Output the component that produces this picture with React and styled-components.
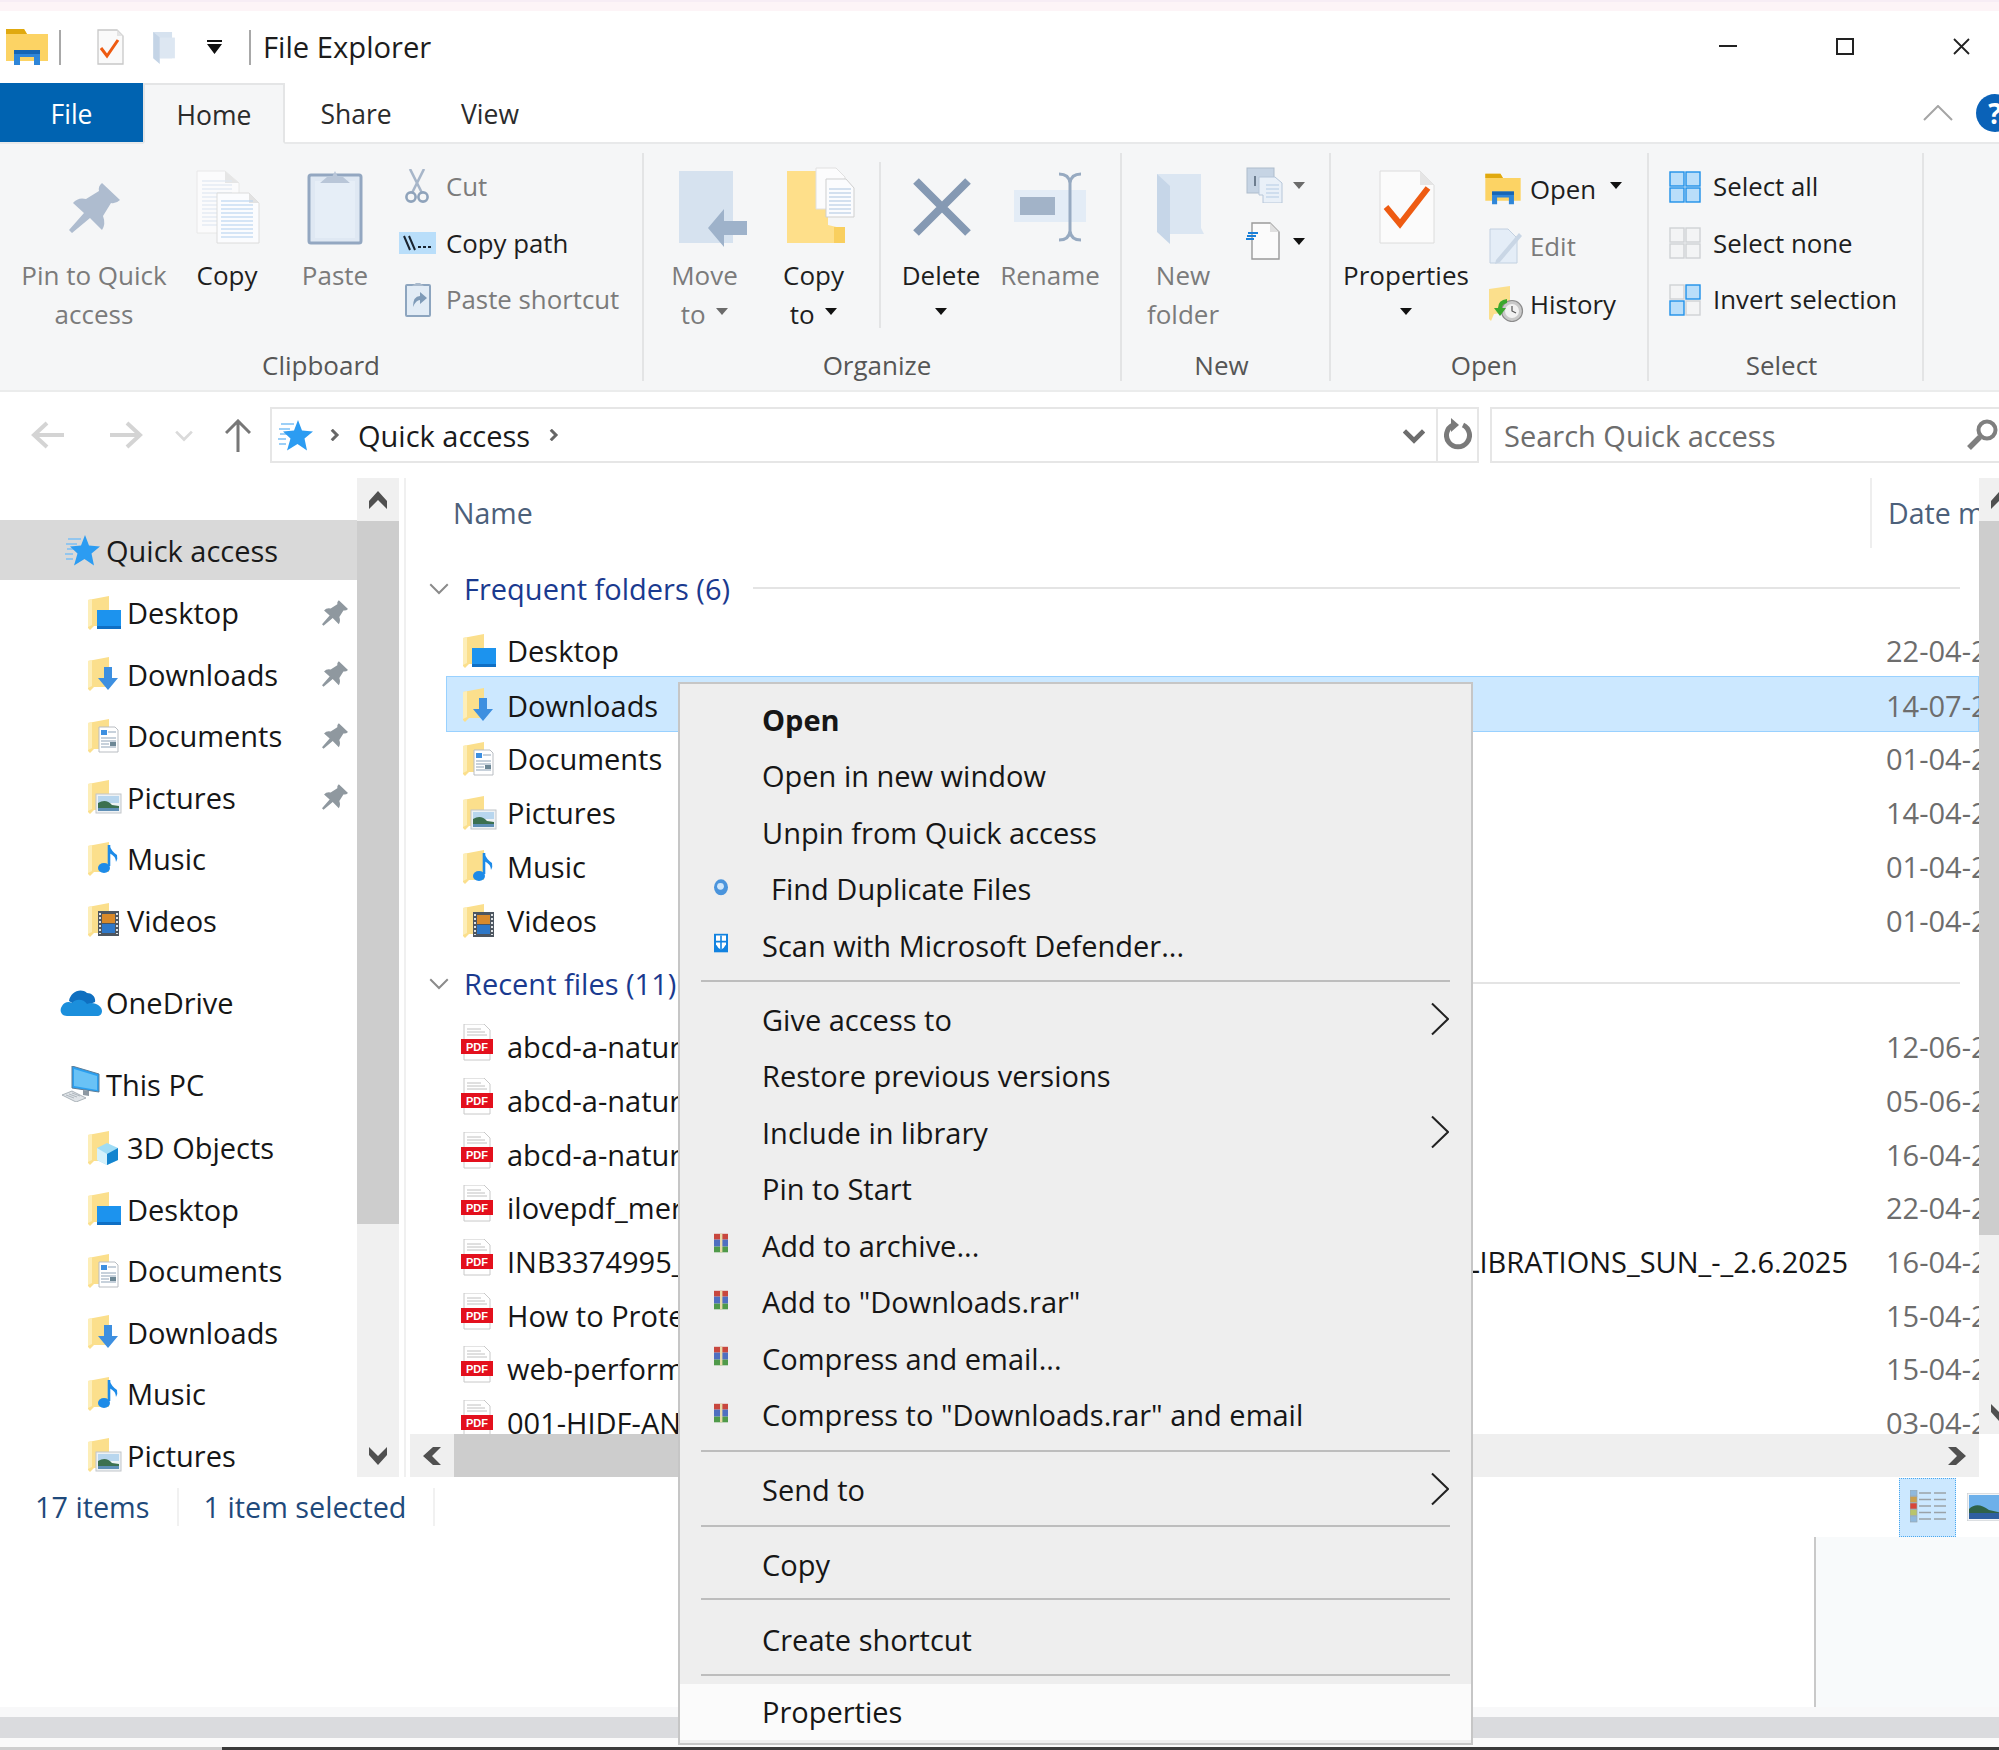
import React from 'react'
import styled, { createGlobalStyle } from 'styled-components'

const GlobalStyle = createGlobalStyle`
  html, body { margin: 0; padding: 0; background: #fff; }
  body { font-family: "Open Sans", "Noto Sans", sans-serif; color: #1a1a1a; }
  * { box-sizing: border-box; }
  svg { display: block; flex: none; }
`

const Page = styled.div`
  position: relative;
  width: 1999px;
  height: 1750px;
  overflow: hidden;
  background: #fff;
  display: flex;
  flex-direction: column;
`

const TopStrip = styled.div`
  height: 11px;
  flex: none;
  background: #fdf4f7;
  border-top: 2px solid #f7edf5;
`

const TitleBar = styled.div`
  height: 72px;
  flex: none;
  display: flex;
  align-items: center;
  padding-left: 6px;
`

const TitleDivider = styled.div`
  width: 2px;
  height: 35px;
  background: #a8a8a8;
  margin: ${p => p.$margin};
`

const TitleText = styled.div`
  font-size: 29.2px;
  margin-left: 12px;
  color: #1c1c1c;
`

const WindowButtons = styled.div`
  margin-left: auto;
  display: flex;
  align-items: center;
  gap: 99px;
  padding: 0 29px 2px 0;
`

const TabRow = styled.div`
  height: 61px;
  flex: none;
  display: flex;
  align-items: flex-start;
  position: relative;
  border-bottom: 2px solid #e8e9ea;
`

const Tab = styled.div`
  width: ${p => p.$w}px;
  height: ${p => (p.$active ? 61 : 59)}px;
  padding-top: 3px;
  display: flex;
  align-items: center;
  justify-content: center;
  font-size: 26.5px;
  color: ${p => (p.$file ? '#fff' : '#2b2b2b')};
  background: ${p => (p.$file ? '#0063b1' : p.$active ? '#f5f6f7' : 'transparent')};
  border: ${p => (p.$active ? '2px solid #e4e5e6' : 'none')};
  border-bottom: ${p => (p.$active ? '2px solid #f5f6f7' : 'none')};
  z-index: 1;
`

const TabRight = styled.div`
  margin-left: auto;
  display: flex;
  align-items: center;
  height: 59px;
  gap: 23px;
  margin-right: -15px;
`

const HelpBadge = styled.div`
  width: 38px;
  height: 38px;
  border-radius: 50%;
  background: #0a62b8;
  color: #fff;
  font-size: 28px;
  font-weight: 700;
  display: flex;
  align-items: center;
  justify-content: center;
`

const Ribbon = styled.div`
  height: 248px;
  flex: none;
  display: flex;
  padding: 9px 0;
  background: #f5f6f7;
  border-bottom: 2px solid #ebecec;
`

const Group = styled.div`
  width: ${p => p.$w}px;
  flex: none;
  display: flex;
  flex-direction: column;
  border-right: 2px solid #e3e4e5;
`

const GroupBody = styled.div`
  flex: 1;
  display: flex;
  min-height: 0;
`

const GroupLabel = styled.div`
  height: 34px;
  flex: none;
  text-align: center;
  line-height: 36px;
  font-size: 26px;
  color: #565656;
  padding-right: ${p => p.$shift || 0}px;
`

const BigButton = styled.div`
  width: ${p => p.$w}px;
  flex: none;
  display: flex;
  flex-direction: column;
  align-items: center;
  padding-top: 11.5px;
`

const BigIconBox = styled.div`
  height: 91px;
  padding-top: 4px;
  flex: none;
`

const BigLabel = styled.div`
  font-size: 26px;
  line-height: 39px;
  text-align: center;
  color: ${p => (p.$off ? '#7b7b7b' : '#1e1e1e')};
`

const Caret = styled.span`
  display: inline-block;
  width: 0;
  height: 0;
  border-left: 6px solid transparent;
  border-right: 6px solid transparent;
  border-top: 7px solid ${p => (p.$off ? '#6b6b6b' : '#111')};
  vertical-align: 9px;
  margin-left: ${p => p.$ml || 0}px;
  margin-bottom: ${p => p.$mb || 0}px;
`

const InnerDivider = styled.div`
  width: 2px;
  height: 166px;
  margin: 9px 0 0 ${p => p.$ml}px;
  background: #e3e4e5;
  flex: none;
`

const SmallColumn = styled.div`
  display: flex;
  flex-direction: column;
  flex: none;
  padding-top: ${p => p.$pt}px;
  margin-left: ${p => p.$ml || 0}px;
`

const SmallRow = styled.div`
  height: ${p => p.$h}px;
  display: flex;
  align-items: center;
  font-size: 25.8px;
  white-space: nowrap;
  color: ${p => (p.$off ? '#7b7b7b' : '#1e1e1e')};
`

const IconSlot = styled.div`
  width: ${p => p.$w}px;
  flex: none;
  display: flex;
  padding-left: ${p => p.$pl || 0}px;
`

const AddressRow = styled.div`
  height: 86px;
  flex: none;
  display: flex;
  align-items: flex-start;
  padding-top: 15px;
`

const NavArrows = styled.div`
  width: 270px;
  height: 56px;
  flex: none;
  display: flex;
  align-items: center;
  padding-left: 31px;
`

const AddressBox = styled.div`
  width: 1209px;
  height: 56px;
  flex: none;
  border: 2px solid #e6e6e6;
  display: flex;
  align-items: center;
  font-size: 29px;
  padding-left: 6px;
`

const AddressEnd = styled.div`
  margin-left: auto;
  height: 100%;
  display: flex;
  align-items: center;
  padding-right: ${p => p.$pr || 0}px;
`

const AddressRefresh = styled.div`
  width: 41px;
  height: 100%;
  border-left: 2px solid #e6e6e6;
  display: flex;
  align-items: center;
  justify-content: center;
  margin-left: 11px;
`

const SearchBox = styled.div`
  width: 520px;
  height: 56px;
  margin-left: 11px;
  flex: none;
  border: 2px solid #e6e6e6;
  display: flex;
  align-items: center;
  font-size: 29px;
  color: #6d6d6d;
  padding-left: 12px;
`

const Main = styled.div`
  height: 999px;
  flex: none;
  display: flex;
`

const NavPane = styled.div`
  width: 357px;
  flex: none;
  overflow: hidden;
  padding-top: 42px;
`

const NavSelected = styled.div`
  height: 60px;
  margin-bottom: 2px;
  background: #d9d9d9;
  display: flex;
  align-items: center;
  padding-left: 65px;
  font-size: 29px;
`

const NavRow = styled.div`
  height: 61.5px;
  flex: none;
  display: flex;
  align-items: center;
  font-size: 29px;
  padding-left: ${p => p.$pl}px;
  margin-top: ${p => p.$mt || 0}px;
  margin-bottom: ${p => p.$mb || 0}px;
  color: #161616;
`

const NavText = styled.span`
  margin-left: ${p => p.$ml}px;
`

const NavPin = styled.div`
  margin-left: auto;
  margin-right: 9px;
`

const VScroll = styled.div`
  width: ${p => p.$w}px;
  height: ${p => p.$h || 999}px;
  flex: none;
  overflow: hidden;
  display: flex;
  flex-direction: column;
  background: #f0f0f0;
`

const ScrollButton = styled.div`
  width: 42px;
  height: 43px;
  flex: none;
  display: flex;
  align-items: center;
  justify-content: center;
  margin-top: ${p => (p.$end ? 'auto' : 0)};
`

const ScrollThumb = styled.div`
  height: ${p => p.$h}px;
  flex: none;
  background: #cdcdcd;
`

const Content = styled.div`
  width: 1575px;
  flex: none;
  margin-left: 5px;
  border-left: 2px solid #f0f0f0;
  display: flex;
  flex-direction: column;
  min-width: 0;
`

const FileArea = styled.div`
  height: 956px;
  flex: none;
  overflow: hidden;
`

const ColumnHead = styled.div`
  height: 70px;
  display: flex;
  align-items: center;
  font-size: 28.5px;
  color: #4c607a;
  padding-left: 47px;
`

const ColumnName = styled.div`
  width: 1417px;
  flex: none;
`

const ColumnDate = styled.div`
  height: 70px;
  border-left: 2px solid #eee;
  padding-left: 16px;
  line-height: 70px;
  white-space: nowrap;
  width: 109px;
  flex: none;
  overflow: hidden;
`

const SectionRow = styled.div`
  height: 40px;
  margin-top: ${p => p.$mt}px;
  display: flex;
  align-items: center;
  padding-left: 23px;
  font-size: 29px;
  color: #1a3a8f;
`

const SectionName = styled.span`
  margin-left: 15px;
  white-space: nowrap;
`

const SectionLine = styled.div`
  flex: none;
  width: ${p => p.$w}px;
  height: 2px;
  background: #e4e4e4;
  margin-left: auto;
  margin-right: 19px;
`

const FileList = styled.div`
  margin-top: ${p => p.$mt}px;
`

const FileRow = styled.div`
  height: ${p => (p.$selected ? 56 : p.$h)}px;
  margin: ${p => (p.$selected ? '-1.5px 0 -0.5px 40px' : '0 0 0 40px')};
  padding: ${p => (p.$selected ? '2px 0 0 17px' : '0 0 0 17px')};
  display: flex;
  align-items: center;
  font-size: 29px;
  color: #161616;
  white-space: nowrap;
  background: ${p => (p.$selected ? '#cce8ff' : 'transparent')};
  box-shadow: ${p => (p.$selected ? 'inset 0 0 0 1px #99d1ff' : 'none')};
`

const PdfSlot = styled.div`
  margin: -8px 0 0 -2px;
  flex: none;
`

const FileName = styled.div`
  width: 1379px;
  flex: none;
  margin-left: ${p => p.$ml}px;
  padding-right: ${p => p.$pr || 0}px;
  display: flex;
  justify-content: space-between;
  overflow: hidden;
`

const FileDate = styled.div`
  width: 95px;
  flex: none;
  overflow: hidden;
  color: #6d6d6d;
`

const HScroll = styled.div`
  height: 43px;
  flex: none;
  margin-left: 4px;
  display: flex;
  background: #efefef;
`

const HThumb = styled.div`
  width: 800px;
  background: #cdcdcd;
`

const HButton = styled.div`
  width: 44px;
  display: flex;
  align-items: center;
  justify-content: center;
  margin-left: ${p => (p.$end ? 'auto' : 0)};
`

const StatusBar = styled.div`
  height: 60px;
  flex: none;
  display: flex;
  align-items: center;
  font-size: 28.8px;
  color: #1f4a7b;
`

const StatusCell = styled.div`
  height: 38px;
  line-height: 38px;
  padding: 0 ${p => p.$pr}px 0 ${p => p.$pl}px;
  border-right: 2px solid #f1f1f1;
`

const ViewButton = styled.div`
  width: 57px;
  height: 59px;
  margin-left: auto;
  background: #cce8ff;
  border: 1px dotted #4aa8f0;
  display: flex;
  align-items: center;
  justify-content: center;
`

const ViewThumb = styled.div`
  margin: 0 -4px 0 11px;
`

const LowerPane = styled.div`
  height: 170px;
  flex: none;
  display: flex;
  justify-content: flex-end;
`

const PreviewPane = styled.div`
  width: 185px;
  background: #f8fafb;
  border-left: 2px solid #c9c9c9;
`

const Fade = styled.div`
  height: 10px;
  flex: none;
  background: #f8f8f9;
`

const GrayBar = styled.div`
  height: 21px;
  flex: none;
  background: #dadbde;
`

const BottomBand = styled.div`
  height: 9px;
  flex: none;
  background: #fafafa;
`

const BottomEdge = styled.div`
  height: 3px;
  flex: none;
  background: linear-gradient(to right, #cfcfcf 0, #cfcfcf 222px, #3a3a3a 222px);
`

const ContextMenu = styled.div`
  position: absolute;
  left: 678px;
  top: 682px;
  width: 795px;
  height: 1063px;
  padding-top: 7px;
  background: #eeeeee;
  border: 2px solid #c6c6c6;
  display: flex;
  flex-direction: column;
  z-index: 5;
`

const MenuItem = styled.div`
  height: 56.5px;
  flex: none;
  display: flex;
  align-items: center;
  font-size: 29px;
  color: #161616;
  position: relative;
  padding-left: ${p => p.$pl || 82}px;
  font-weight: ${p => (p.$bold ? 700 : 400)};
  background: ${p => (p.$hot ? '#fbfbfb' : 'transparent')};
`

const MenuIcon = styled.div`
  position: absolute;
  left: 34px;
  top: 50%;
  transform: translateY(-60%);
`

const MenuArrow = styled.div`
  position: absolute;
  right: 22px;
  top: 50%;
  transform: translateY(-50%);
`

const MenuSeparator = styled.div`
  height: ${p => p.$h}px;
  flex: none;
  padding-top: ${p => p.$pt}px;
`

const MenuLine = styled.div`
  height: 2px;
  margin: 0 21px;
  background: #bdbdbd;
`

const TurnedSvg = styled.svg`
  transform: rotate(${p => p.$deg}deg);
`

const FlippedSvg = styled.svg`
  transform: ${p => (p.$flip ? 'scaleX(-1)' : 'none')};
`

const BigSvg = styled.svg`
  overflow: visible;
`

// ---- drawings ----

const FolderBase = ({ children }) => (
  <svg width="34" height="34" viewBox="0 0 34 34">
    <path d="M0 4 L21 0 V30 L6 30 L2 34 L0 32Z" fill="#fbdf8c" />
    <path d="M0 4 L4 3 V29 L0 31Z" fill="#fdeeb8" />
    {children}
  </svg>
)

const DesktopFolder = () => (
  <FolderBase>
    <rect x="9" y="14" width="24" height="19" fill="#1c93ee" />
    <rect x="9" y="30" width="24" height="3" fill="#0f6fc4" />
  </FolderBase>
)

const DownloadsFolder = () => (
  <FolderBase>
    <path d="M16 10 H24 V21 H30 L20 33 L10 21 H16Z" fill="#3d8fe0" />
  </FolderBase>
)

const DocumentsFolder = () => (
  <FolderBase>
    <path d="M11 8 H27 L30 11 V33 H11Z" fill="#fff" stroke="#b9bdc2" />
    <rect x="13" y="11" width="6" height="5" fill="#3d8fe0" />
    <path d="M20 13 H28 M13 19 H28 M13 22 H28 M13 25 H21 M13 28 H28" stroke="#8fa3b8" strokeWidth="1.2" />
    <rect x="22" y="23" width="6" height="4" fill="#6d8795" />
  </FolderBase>
)

const PicturesFolder = () => (
  <FolderBase>
    <rect x="8" y="14" width="25" height="19" fill="#eef2f5" stroke="#c2c6ca" />
    <rect x="10" y="16" width="21" height="7" fill="#b8d6ee" />
    <path d="M10 23 Q18 18 24 25 L31 26 V31 H10Z" fill="#3c7050" />
    <rect x="10" y="28" width="21" height="3" fill="#5f8fb6" />
  </FolderBase>
)

const MusicFolder = () => (
  <FolderBase>
    <path d="M21 3 V24" stroke="#1d8be8" strokeWidth="2.6" />
    <path d="M21 3 Q24 10 29 13 Q30 17 28 20 Q28 14 21 11Z" fill="#1d8be8" />
    <ellipse cx="16" cy="26" rx="6" ry="5" fill="#1d8be8" />
  </FolderBase>
)

const VideosFolder = () => (
  <FolderBase>
    <rect x="10" y="8" width="21" height="25" fill="#4d5660" />
    <rect x="14" y="11" width="13" height="9" fill="#d98a2b" />
    <rect x="14" y="21" width="13" height="9" fill="#2f78c8" />
    <path d="M12 10 V31 M29 10 V31" stroke="#dfe3e6" strokeWidth="2" strokeDasharray="2 2" />
  </FolderBase>
)

const ObjectsFolder = () => (
  <FolderBase>
    <path d="M19 12 L30 17 V29 L19 34 L9 29 V17Z" fill="#9fdcf5" />
    <path d="M19 23 L30 17 V29 L19 34Z" fill="#1384cf" />
    <path d="M19 23 L9 17 V29 L19 34Z" fill="#d5f1fb" />
  </FolderBase>
)

const folderIcons = {
  desktop: DesktopFolder,
  downloads: DownloadsFolder,
  documents: DocumentsFolder,
  pictures: PicturesFolder,
  music: MusicFolder,
  videos: VideosFolder,
  objects: ObjectsFolder,
}

const StarIcon = () => (
  <svg width="35" height="31" viewBox="0 0 35 31">
    <path d="M3 4 H16 M1 9 H12 M2 14 H9 M0 19 H8 M1 24 H8" stroke="#7cc0f5" strokeWidth="1.5" />
    <path d="M20 0 L24 10.5 L35 11.5 L26.5 18.5 L29 30.5 L19.5 24 L9 30.5 L12.5 18.5 L5 11.5 L16 10.5Z" fill="#2c9cf2" />
  </svg>
)

const CloudIcon = () => (
  <svg width="42" height="27" viewBox="0 0 42 27">
    <path d="M9 12 C10 4 20 -2 27 4 C32 4 36 8 35 13 L20 19Z" fill="#0f6fc0" />
    <path d="M7 27 C1 27 -1 21 2 17 C4 13 9 12 12 14 C16 9 24 10 27 15 C34 12 42 17 42 22 C42 25 40 27 37 27Z" fill="#1b8fdc" />
  </svg>
)

const PcIcon = () => (
  <svg width="38" height="36" viewBox="0 0 38 36">
    <path d="M10 0 L37 8 V26 L10 22Z" fill="#2a9ff0" stroke="#5d7c96" strokeWidth="1" />
    <path d="M12 3 L35 10 V24 L12 20Z" fill="#69c2f6" />
    <path d="M21 24 L27 25 V30 L21 29Z" fill="#8d98a2" />
    <path d="M0 29 L10 25 L24 32 L14 36Z" fill="#dfe3e7" stroke="#9aa3ab" strokeWidth=".8" />
    <path d="M4 29 L12 32 M7 28 L15 31 M10 27 L18 30" stroke="#a8b0b8" strokeWidth=".9" />
  </svg>
)

const PinIcon = () => (
  <svg width="26" height="26" viewBox="0 0 51 50">
    <path d="M33 0 L51 17 Q47 21 42 20 L34 33 Q37 41 33 47 L21 35 L3 50 L0 47 L15 30 L4 20 Q9 14 17 16 L30 8 Q29 3 33 0Z" fill="#8f989f" />
  </svg>
)

const PdfIcon = () => (
  <svg width="32" height="37" viewBox="0 0 32 37">
    <path d="M3 0 H23 L29 6 V36 H3Z" fill="#fff" stroke="#c8c8c8" />
    <path d="M6 5 H20 M6 8 H24 M6 11 H26" stroke="#c0c0c0" />
    <rect x="0" y="15" width="32" height="15" fill="#e3101d" />
    <text x="16" y="27" textAnchor="middle" fontSize="11" fontWeight="700" fill="#fff" fontFamily="Liberation Sans, sans-serif">PDF</text>
  </svg>
)

const ExplorerIcon = ({ w = 42, h = 38 }) => (
  <svg width={w} height={h} viewBox="0 0 42 38">
    <path d="M0 1 H18 L21 6 H42 V33 H0Z" fill="#fcd364" />
    <path d="M0 1 H18 L21 6 H0Z" fill="#e0a90f" />
    <path d="M8 37 V22 H34 V37 H28 V29 H14 V37Z" fill="#2f86d8" />
    <path d="M8 22 H34 V26 H8Z" fill="#1565b4" />
  </svg>
)

const PageCheck = () => (
  <svg width="27" height="36" viewBox="0 0 27 36">
    <path d="M1 1 H20 L26 7 V35 H1Z" fill="#fafafa" stroke="#c8c8c8" strokeWidth="1.3" />
    <path d="M20 1 V7 H26Z" fill="#e4e4e4" />
    <path d="M4 19 L10 27 L21 11" fill="none" stroke="#ee5b12" strokeWidth="3" />
  </svg>
)

const PaleFolder = () => (
  <svg width="23" height="34" viewBox="0 0 24 36">
    <path d="M0 2 H20 V30 H5Z" fill="#d6e2ef" />
    <path d="M0 2 L7 8 V36 L0 30Z" fill="#c4d4e6" />
    <path d="M7 8 H23 V30 H7Z" fill="#dde7f2" />
  </svg>
)

const turns = { down: 0, up: 180, left: 90, right: -90 }

const Chevron = ({ dir = 'down', size = 16, color = '#555', weight = 3 }) => (
  <TurnedSvg $deg={turns[dir]} width={size} height={size} viewBox="0 0 16 16">
    <path d="M1 5 L8 12 L15 5" fill="none" stroke={color} strokeWidth={weight} />
  </TurnedSvg>
)

const BlockChevron = ({ dir = 'down' }) => (
  <TurnedSvg $deg={turns[dir]} width="20" height="18" viewBox="0 0 20 18">
    <path d="M1 0 L10 9 L19 0 V8 L10 18 L1 8Z" fill="#505050" />
  </TurnedSvg>
)

const Arrow = ({ flip }) => (
  <FlippedSvg $flip={flip} width="35" height="30" viewBox="0 0 35 30">
    <path d="M33 15 H4 M16 3 L3 15 L16 27" fill="none" stroke="#d4d4d4" strokeWidth="4" />
  </FlippedSvg>
)

const BigIcon = ({ children }) => (
  <BigSvg width="92" height="78" viewBox="0 0 92 78">
    {children}
  </BigSvg>
)

const PinBig = () => (
  <BigIcon>
    <g transform="translate(21 14)">
      <path d="M33 0 L51 17 Q47 21 42 20 L34 33 Q37 41 33 47 L21 35 L3 50 L0 47 L15 30 L4 20 Q9 14 17 16 L30 8 Q29 3 33 0Z" fill="#aebccf" />
    </g>
  </BigIcon>
)

const lineRows = (x, y, w, n, color) =>
  Array.from({ length: n }, (_, i) => (
    <path key={i} d={`M${x} ${y + i * 4} H${x + w}`} stroke={color} strokeWidth="1.2" />
  ))

const CopyBig = () => (
  <BigIcon>
    <path d="M16 2 H44 L58 14 V64 H16Z" fill="#fbfbfc" stroke="#e8e8e8" />
    <path d="M44 2 V14 H58Z" fill="#e6e6e6" />
    {lineRows(21, 12, 30, 12, '#e0e8f2')}
    <path d="M36 24 H68 L78 34 V74 H36Z" fill="#fbfcfe" stroke="#dcdcdc" />
    <path d="M68 24 V34 H78Z" fill="#e2e2e2" />
    {lineRows(40, 32, 32, 10, '#bcd6f0')}
  </BigIcon>
)

const PasteBig = () => (
  <BigIcon>
    <rect x="20" y="6" width="52" height="68" rx="2" fill="#dfe8f3" stroke="#93a7c1" strokeWidth="3" />
    <rect x="26" y="12" width="40" height="57" fill="#e6eef7" />
    <path d="M31 14 L38 8 H43 L46 2 L49 8 H54 L61 14Z" fill="#b9c6d8" />
  </BigIcon>
)

const ScissorsIcon = () => (
  <svg width="24" height="35" viewBox="0 0 24 35">
    <path d="M5 0 L17 24 M19 0 L7 24" stroke="#a7b6c9" strokeWidth="2.6" fill="none" />
    <circle cx="6" cy="28" r="4.6" fill="none" stroke="#8fa3bb" strokeWidth="2.6" />
    <circle cx="18" cy="28" r="4.6" fill="none" stroke="#8fa3bb" strokeWidth="2.6" />
  </svg>
)

const CopyPathIcon = () => (
  <svg width="37" height="22" viewBox="0 0 37 22">
    <rect width="37" height="22" fill="#b9defa" />
    <path d="M5 4 L11 18 M10 4 L16 18" stroke="#1a2430" strokeWidth="2" />
    <path d="M19 15 h3 M24 15 h3 M29 15 h3" stroke="#1a2430" strokeWidth="2" />
  </svg>
)

const PasteShortcutIcon = () => (
  <svg width="26" height="36" viewBox="0 0 26 36">
    <rect x="1" y="4" width="24" height="31" rx="1" fill="#e2ecf6" stroke="#8da5bf" strokeWidth="2" />
    <path d="M7 5 L11 2 H15 L19 5Z" fill="#a9bacd" />
    <path d="M8 26 Q8 15 15 15 V11 L22 17 L15 23 V19 Q11 19 8 26Z" fill="#7f9bb8" />
  </svg>
)

const MoveBig = () => (
  <BigIcon>
    <rect x="20" y="2" width="54" height="72" fill="#d6e2ef" />
    <path d="M49 59 L65 40 V52 H88 V66 H65 V78Z" fill="#9eb2ca" />
  </BigIcon>
)

const CopyToBig = () => (
  <BigIcon>
    <path d="M19 2 H60 V56 L77 60 V74 H19Z" fill="#fedf8a" />
    <path d="M66 58 H77 V74 H66Z" fill="#f9cf5f" />
    <path d="M48 -1 H68 L77 8 V40 H48Z" fill="#fcfcfd" stroke="#e0e0e0" />
    <path d="M58 10 H78 L86 19 V48 H58Z" fill="#fbfcfe" stroke="#cfcfcf" />
    {lineRows(61, 20, 22, 7, '#b9cde4')}
  </BigIcon>
)

const DeleteBig = () => (
  <BigIcon>
    <path d="M21 12 L73 64 M73 12 L21 64" stroke="#8599b3" strokeWidth="8" />
  </BigIcon>
)

const RenameBig = () => (
  <BigIcon>
    <rect x="10" y="21" width="72" height="32" fill="#e3ecf6" />
    <rect x="16" y="28" width="35" height="18" fill="#a2b3c8" />
    <path d="M55 5 Q65 5 66 14 V62 Q65 71 55 71 M77 5 Q67 5 66 14 M66 62 Q67 71 77 71" fill="none" stroke="#97aac1" strokeWidth="3" />
  </BigIcon>
)

const NewFolderBig = () => (
  <BigIcon>
    <g transform="translate(20 5)">
      <path d="M0 0 H44 V54 L47 60 H10 L0 54Z" fill="#dbe6f2" />
      <path d="M0 0 L13 12 V70 L0 58Z" fill="#c6d6e8" />
    </g>
  </BigIcon>
)

const PropertiesBig = () => (
  <BigIcon>
    <g transform="translate(20 2)">
      <path d="M0 0 H40 L54 14 V72 H0Z" fill="#fbfbfb" stroke="#dcdcdc" />
      <path d="M40 0 V14 H54Z" fill="#e5e5e5" />
      <path d="M6 36 L20 53 L48 17" fill="none" stroke="#ee5b12" strokeWidth="6" />
    </g>
  </BigIcon>
)

const MoveItemsSmall = () => (
  <svg width="37" height="36" viewBox="0 0 37 36">
    <rect x="1" y="1" width="27" height="25" fill="#c6d4e4" stroke="#aebccc" />
    <path d="M8 9 h2 v10 h-2z" fill="#6d7d8f" />
    <path d="M13 10 H29 L36 16 V36 H17 V28 H13Z" fill="#e9f0f8" stroke="#b6c6d9" />
    <path d="M20 18 H33 M20 22 H33 M20 26 H33 M20 30 H33" stroke="#b4cbe4" />
  </svg>
)

const NewItemSmall = () => (
  <svg width="34" height="38" viewBox="0 0 34 38">
    <path d="M6 1 H24 L33 10 V37 H6Z" fill="#fbfbfb" stroke="#9a9a9a" strokeWidth="1.4" />
    <path d="M24 1 V10 H33Z" fill="#e0e0e0" />
    <path d="M2 11 H12 M1 14 H10 M0 17 H8" stroke="#1a7fd8" strokeWidth="2" />
  </svg>
)

const EditIcon = () => (
  <svg width="34" height="36" viewBox="0 0 34 36">
    <path d="M1 1 H19 L28 10 V35 H1Z" fill="#e4edf7" stroke="#c2d0e0" />
    <path d="M7 32 L30 5 L33 8 L11 34 L6 36Z" fill="#c9d6e5" />
  </svg>
)

const HistoryIcon = () => (
  <svg width="35" height="36" viewBox="0 0 35 36">
    <path d="M0 3 L21 0 V26 L5 28 L2 35 L0 33Z" fill="#fbdf8c" />
    <circle cx="23" cy="25" r="10.5" fill="#c9c9c9" stroke="#8b8b8b" strokeWidth="1.2" />
    <circle cx="23" cy="25" r="7" fill="#f1f1f1" />
    <path d="M23 20 V25 L27 27" fill="none" stroke="#555" strokeWidth="1.2" />
    <path d="M18 13 Q9 14 9 22 H5 L11 30 L17 22 H13 Q13 18 18 17Z" fill="#3aa82d" />
  </svg>
)

const SelectGrid = ({ on }) => {
  const cell = (x, y, active, key) => (
    <rect key={key} x={x} y={y} width="14" height="14" fill={active ? '#b9defa' : '#f3f4f5'} stroke={active ? '#1e90e8' : '#cfd2d5'} strokeWidth="1.4" />
  )
  return (
    <svg width="33" height="33" viewBox="0 0 33 33">
      {cell(1, 2, on[0], 'a')}
      {cell(17, 2, on[1], 'b')}
      {cell(1, 18, on[2], 'c')}
      {cell(17, 18, on[3], 'd')}
    </svg>
  )
}

const RefreshIcon = () => (
  <svg width="28" height="34" viewBox="0 0 28 34">
    <path d="M9 7 A11.5 11.5 0 1 0 19 7" fill="none" stroke="#7a7a7a" strokeWidth="5" />
    <path d="M7 0 L7 14 L15 7Z" fill="#7a7a7a" />
  </svg>
)

const SearchIcon = () => (
  <svg width="32" height="32" viewBox="0 0 32 32">
    <circle cx="21" cy="11" r="8.5" fill="none" stroke="#7f7f7f" strokeWidth="4" />
    <path d="M14 18 L3 29" stroke="#7f7f7f" strokeWidth="5.5" />
  </svg>
)

const DetailsView = () => (
  <svg width="36" height="34" viewBox="0 0 36 34">
    {[0, 1, 2, 3, 4].map(i => (
      <g key={i}>
        <rect x="0" y={i * 6.5} width="7" height="6" fill={['#8fb8dc', '#c9a04d', '#d8453a', '#b9c46a', '#8fb8dc'][i]} stroke="#9ba6ad" strokeWidth=".7" />
        <path d={`M9 ${i * 6.5 + 3} H21 M24 ${i * 6.5 + 3} H36`} stroke="#9aa2a8" strokeWidth="1.6" />
      </g>
    ))}
  </svg>
)

const ThumbView = () => (
  <svg width="36" height="28" viewBox="0 0 36 28">
    <rect width="36" height="28" fill="#f3f5f7" stroke="#c4c8cc" />
    <rect x="2" y="2" width="34" height="24" fill="#6db0ea" />
    <path d="M2 16 Q10 8 22 17 L36 20 V22 H2Z" fill="#2f6248" />
    <rect x="2" y="20" width="34" height="6" fill="#2f5fa0" />
  </svg>
)

const DuplicateIcon = () => (
  <svg width="14" height="17" viewBox="0 0 14 17">
    <ellipse cx="7" cy="8.5" rx="7" ry="8" fill="#4a94dc" />
    <circle cx="6.5" cy="7.5" r="3.4" fill="#cfe6fa" />
  </svg>
)

const DefenderIcon = () => (
  <svg width="14" height="19" viewBox="0 0 14 19">
    <rect width="14" height="19" fill="#1182e0" />
    <path d="M2 2 H12 V11 Q10 15 7 16 Q4 15 2 11Z" fill="#fff" />
    <path d="M7 2 V16 M2 8 H12" stroke="#1182e0" strokeWidth="1.6" />
  </svg>
)

const RarIcon = () => (
  <svg width="14" height="19" viewBox="0 0 14 19">
    <rect y="0" width="14" height="6" fill="#c8473e" />
    <rect y="6" width="14" height="7" fill="#4f6fc0" />
    <rect y="13" width="14" height="6" fill="#4f9a4a" />
    <rect x="6" width="2.4" height="19" fill="#e8d9a8" />
  </svg>
)

const MenuChevron = () => (
  <svg width="18" height="33" viewBox="0 0 18 33">
    <path d="M1 1 L17 16.5 L1 32" fill="none" stroke="#222" strokeWidth="2" />
  </svg>
)

// ---- data ----

const quickNav = [
  ['desktop', 'Desktop', true],
  ['downloads', 'Downloads', true],
  ['documents', 'Documents', true],
  ['pictures', 'Pictures', true],
  ['music', 'Music'],
  ['videos', 'Videos'],
]

const pcNav = [
  ['objects', '3D Objects'],
  ['desktop', 'Desktop'],
  ['documents', 'Documents'],
  ['downloads', 'Downloads'],
  ['music', 'Music'],
  ['pictures', 'Pictures'],
]

const frequent = [
  ['desktop', 'Desktop', '22-04-2025'],
  ['downloads', 'Downloads', '14-07-2025', true],
  ['documents', 'Documents', '01-04-2025'],
  ['pictures', 'Pictures', '14-04-2025'],
  ['music', 'Music', '01-04-2025'],
  ['videos', 'Videos', '01-04-2025'],
]

const recent = [
  ['abcd-a-natural-language', '12-06-2025'],
  ['abcd-a-natural-language', '05-06-2025'],
  ['abcd-a-natural-language', '16-04-2025'],
  ['ilovepdf_merged', '22-04-2025'],
  ['INB3374995_', '16-04-2025', 'LIBRATIONS_SUN_-_2.6.2025'],
  ['How to Protect', '15-04-2025'],
  ['web-performance', '15-04-2025'],
  ['001-HIDF-ANALYSIS', '03-04-2025'],
]

const menuTop = [
  { label: 'Open', bold: true },
  { label: 'Open in new window' },
  { label: 'Unpin from Quick access' },
  { label: 'Find Duplicate Files', icon: <DuplicateIcon />, pl: 91 },
  { label: 'Scan with Microsoft Defender...', icon: <DefenderIcon /> },
]

const menuMiddle = [
  { label: 'Give access to', more: true },
  { label: 'Restore previous versions' },
  { label: 'Include in library', more: true },
  { label: 'Pin to Start' },
  { label: 'Add to archive...', icon: <RarIcon /> },
  { label: 'Add to "Downloads.rar"', icon: <RarIcon /> },
  { label: 'Compress and email...', icon: <RarIcon /> },
  { label: 'Compress to "Downloads.rar" and email', icon: <RarIcon /> },
]

const renderMenuItem = item => (
  <MenuItem key={item.label} $bold={item.bold} $pl={item.pl}>
    {item.icon && <MenuIcon>{item.icon}</MenuIcon>}
    {item.label}
    {item.more && (
      <MenuArrow>
        <MenuChevron />
      </MenuArrow>
    )}
  </MenuItem>
)

const Folder = ({ kind }) => {
  const Icon = folderIcons[kind]
  return <Icon />
}

const NavItem = ({ kind, label, pinned }) => (
  <NavRow $pl={88}>
    <Folder kind={kind} />
    <NavText $ml={5}>{label}</NavText>
    {pinned && (
      <NavPin>
        <PinIcon />
      </NavPin>
    )}
  </NavRow>
)

const App = () => (
  <Page>
    <GlobalStyle />
    <TopStrip />
    <TitleBar>
      <ExplorerIcon />
      <TitleDivider $margin="0 36px 0 11px" />
      <PageCheck />
      <IconSlot $w={53} $pl={29}>
        <PaleFolder />
      </IconSlot>
      <IconSlot $w={45} $pl={30}>
        <svg width="15" height="14" viewBox="0 0 15 14">
          <path d="M0 0 H15 V2 H0Z M0 4 H15 L7.5 14Z" fill="#111" />
        </svg>
      </IconSlot>
      <TitleDivider $margin="0 0 0 27px" />
      <TitleText>File Explorer</TitleText>
      <WindowButtons>
        <svg width="18" height="2" viewBox="0 0 18 2">
          <rect width="18" height="2" fill="#222" />
        </svg>
        <svg width="18" height="17" viewBox="0 0 18 17">
          <rect x="1" y="1" width="16" height="15" fill="none" stroke="#222" strokeWidth="2" />
        </svg>
        <svg width="17" height="17" viewBox="0 0 17 17">
          <path d="M1 1 L16 16 M16 1 L1 16" stroke="#222" strokeWidth="1.8" />
        </svg>
      </WindowButtons>
    </TitleBar>

    <TabRow>
      <Tab $w={143} $file>File</Tab>
      <Tab $w={142} $active>Home</Tab>
      <Tab $w={142}>Share</Tab>
      <Tab $w={126}>View</Tab>
      <TabRight>
        <svg width="30" height="16" viewBox="0 0 30 16">
          <path d="M1 15 L15 1 L29 15" fill="none" stroke="#a5a5a5" strokeWidth="2" />
        </svg>
        <HelpBadge>?</HelpBadge>
      </TabRight>
    </TabRow>

    <Ribbon>
      <Group $w={644}>
        <GroupBody>
          <BigButton $w={188}>
            <BigIconBox><PinBig /></BigIconBox>
            <BigLabel $off>Pin to Quick<br />access</BigLabel>
          </BigButton>
          <BigButton $w={78}>
            <BigIconBox><CopyBig /></BigIconBox>
            <BigLabel>Copy</BigLabel>
          </BigButton>
          <BigButton $w={138}>
            <BigIconBox><PasteBig /></BigIconBox>
            <BigLabel $off>Paste</BigLabel>
          </BigButton>
          <SmallColumn $pt={5} $ml={-5}>
            <SmallRow $h={56.5} $off>
              <IconSlot $w={47} $pl={6}><ScissorsIcon /></IconSlot>Cut
            </SmallRow>
            <SmallRow $h={56.5}>
              <IconSlot $w={47}><CopyPathIcon /></IconSlot>Copy path
            </SmallRow>
            <SmallRow $h={56.5} $off>
              <IconSlot $w={47} $pl={6}><PasteShortcutIcon /></IconSlot>Paste shortcut
            </SmallRow>
          </SmallColumn>
        </GroupBody>
        <GroupLabel>Clipboard</GroupLabel>
      </Group>

      <Group $w={478}>
        <GroupBody>
          <BigButton $w={121}>
            <BigIconBox><MoveBig /></BigIconBox>
            <BigLabel $off>Move<br />to <Caret $off $ml={4} /></BigLabel>
          </BigButton>
          <BigButton $w={97}>
            <BigIconBox><CopyToBig /></BigIconBox>
            <BigLabel>Copy<br />to <Caret $ml={4} /></BigLabel>
          </BigButton>
          <InnerDivider $ml={17} />
          <BigButton $w={120}>
            <BigIconBox><DeleteBig /></BigIconBox>
            <BigLabel>Delete<br /><Caret /></BigLabel>
          </BigButton>
          <BigButton $w={98}>
            <BigIconBox><RenameBig /></BigIconBox>
            <BigLabel $off>Rename</BigLabel>
          </BigButton>
        </GroupBody>
        <GroupLabel $shift={10}>Organize</GroupLabel>
      </Group>

      <Group $w={209}>
        <GroupBody>
          <BigButton $w={122}>
            <BigIconBox><NewFolderBig /></BigIconBox>
            <BigLabel $off>New<br />folder</BigLabel>
          </BigButton>
          <SmallColumn $pt={4}>
            <SmallRow $h={56}>
              <IconSlot $w={46} $pl={2}><MoveItemsSmall /></IconSlot>
              <Caret $off $ml={3} />
            </SmallRow>
            <SmallRow $h={56}>
              <IconSlot $w={46} $pl={2}><NewItemSmall /></IconSlot>
              <Caret $ml={3} />
            </SmallRow>
          </SmallColumn>
        </GroupBody>
        <GroupLabel $shift={8}>New</GroupLabel>
      </Group>

      <Group $w={318}>
        <GroupBody>
          <BigButton $w={150}>
            <BigIconBox><PropertiesBig /></BigIconBox>
            <BigLabel>Properties<br /><Caret /></BigLabel>
          </BigButton>
          <SmallColumn $pt={7}>
            <SmallRow $h={57.5}>
              <IconSlot $w={49} $pl={4}><ExplorerIcon w={36} h={32} /></IconSlot>
              Open<Caret $ml={14} $mb={6} />
            </SmallRow>
            <SmallRow $h={57.5} $off>
              <IconSlot $w={49} $pl={8}><EditIcon /></IconSlot>Edit
            </SmallRow>
            <SmallRow $h={57.5}>
              <IconSlot $w={49} $pl={8}><HistoryIcon /></IconSlot>History
            </SmallRow>
          </SmallColumn>
        </GroupBody>
        <GroupLabel $shift={10}>Open</GroupLabel>
      </Group>

      <Group $w={275}>
        <GroupBody>
          <SmallColumn $pt={5} $ml={20}>
            <SmallRow $h={56.5}>
              <IconSlot $w={44}><SelectGrid on={[1, 1, 1, 1]} /></IconSlot>Select all
            </SmallRow>
            <SmallRow $h={56.5}>
              <IconSlot $w={44}><SelectGrid on={[0, 0, 0, 0]} /></IconSlot>Select none
            </SmallRow>
            <SmallRow $h={56.5}>
              <IconSlot $w={44}><SelectGrid on={[0, 1, 1, 0]} /></IconSlot>Invert selection
            </SmallRow>
          </SmallColumn>
        </GroupBody>
        <GroupLabel $shift={8}>Select</GroupLabel>
      </Group>
    </Ribbon>

    <AddressRow>
      <NavArrows>
        <Arrow />
        <IconSlot $w={77} $pl={42}>
          <Arrow flip />
        </IconSlot>
        <IconSlot $w={82} $pl={32}>
          <Chevron size={18} color="#dadada" weight={2.4} />
        </IconSlot>
        <svg width="26" height="33" viewBox="0 0 26 33">
          <path d="M13 33 V3 M1 14 L13 2 L25 14" fill="none" stroke="#777" strokeWidth="3" />
        </svg>
      </NavArrows>
      <AddressBox>
        <StarIcon />
        <IconSlot $w={45} $pl={15}>
          <Chevron dir="right" size={12} color="#666" weight={4} />
        </IconSlot>
        Quick access
        <IconSlot $w={30} $pl={17}>
          <Chevron dir="right" size={12} color="#666" weight={4} />
        </IconSlot>
        <AddressEnd>
          <Chevron size={22} color="#6d6d6d" weight={3.4} />
          <AddressRefresh><RefreshIcon /></AddressRefresh>
        </AddressEnd>
      </AddressBox>
      <SearchBox>
        Search Quick access
        <AddressEnd $pr={10}><SearchIcon /></AddressEnd>
      </SearchBox>
    </AddressRow>

    <Main>
      <NavPane>
        <NavSelected>
          <StarIcon />
          <NavText $ml={6}>Quick access</NavText>
        </NavSelected>
        {quickNav.map(([kind, label, pinned]) => (
          <NavItem key={label} kind={kind} label={label} pinned={pinned} />
        ))}
        <NavRow $pl={60} $mt={21}>
          <CloudIcon />
          <NavText $ml={4}>OneDrive</NavText>
        </NavRow>
        <NavRow $pl={62} $mt={20} $mb={2}>
          <PcIcon />
          <NavText $ml={6}>This PC</NavText>
        </NavRow>
        {pcNav.map(([kind, label]) => (
          <NavItem key={label} kind={kind} label={label} />
        ))}
      </NavPane>

      <VScroll $w={42}>
        <ScrollButton><BlockChevron dir="up" /></ScrollButton>
        <ScrollThumb $h={703} />
        <ScrollButton $end><BlockChevron dir="down" /></ScrollButton>
      </VScroll>

      <Content>
        <FileArea>
          <ColumnHead>
            <ColumnName>Name</ColumnName>
            <ColumnDate>Date modified</ColumnDate>
          </ColumnHead>
          <SectionRow $mt={20}>
            <Chevron size={20} color="#8b8b8b" weight={1.6} />
            <SectionName>Frequent folders (6)</SectionName>
            <SectionLine $w={1207} />
          </SectionRow>
          <FileList $mt={15.5}>
            {frequent.map(([kind, label, date, selected]) => (
              <FileRow key={label} $h={54} $selected={selected}>
                <Folder kind={kind} />
                <FileName $ml={10}>{label}</FileName>
                <FileDate>{date}</FileDate>
              </FileRow>
            ))}
          </FileList>
          <SectionRow $mt={15.5}>
            <Chevron size={20} color="#8b8b8b" weight={1.6} />
            <SectionName>Recent files (11)</SectionName>
            <SectionLine $w={500} />
          </SectionRow>
          <FileList $mt={17}>
            {recent.map(([name, date, tail]) => (
              <FileRow key={name + date} $h={53.7}>
                <PdfSlot><PdfIcon /></PdfSlot>
                <FileName $ml={14} $pr={38}>
                  <span>{name}</span>
                  {tail && <span>{tail}</span>}
                </FileName>
                <FileDate>{date}</FileDate>
              </FileRow>
            ))}
          </FileList>
        </FileArea>
        <HScroll>
          <HButton><BlockChevron dir="left" /></HButton>
          <HThumb />
          <HButton $end><BlockChevron dir="right" /></HButton>
        </HScroll>
      </Content>

      <VScroll $w={20} $h={956}>
        <ScrollButton><BlockChevron dir="up" /></ScrollButton>
        <ScrollThumb $h={714} />
        <ScrollButton $end><BlockChevron dir="down" /></ScrollButton>
      </VScroll>
    </Main>

    <StatusBar>
      <StatusCell $pl={35} $pr={27}>17 items</StatusCell>
      <StatusCell $pl={25} $pr={27}>1 item selected</StatusCell>
      <ViewButton><DetailsView /></ViewButton>
      <ViewThumb><ThumbView /></ViewThumb>
    </StatusBar>

    <LowerPane><PreviewPane /></LowerPane>
    <Fade />
    <GrayBar />
    <BottomBand />
    <BottomEdge />

    <ContextMenu>
      {menuTop.map(renderMenuItem)}
      <MenuSeparator $h={17.5} $pt={6}><MenuLine /></MenuSeparator>
      {menuMiddle.map(renderMenuItem)}
      <MenuSeparator $h={18} $pt={7}><MenuLine /></MenuSeparator>
      <MenuItem>Send to<MenuArrow><MenuChevron /></MenuArrow></MenuItem>
      <MenuSeparator $h={19} $pt={7}><MenuLine /></MenuSeparator>
      <MenuItem>Copy</MenuItem>
      <MenuSeparator $h={18} $pt={5}><MenuLine /></MenuSeparator>
      <MenuItem>Create shortcut</MenuItem>
      <MenuSeparator $h={16} $pt={6}><MenuLine /></MenuSeparator>
      <MenuItem $hot>Properties</MenuItem>
    </ContextMenu>
  </Page>
)

export default App
